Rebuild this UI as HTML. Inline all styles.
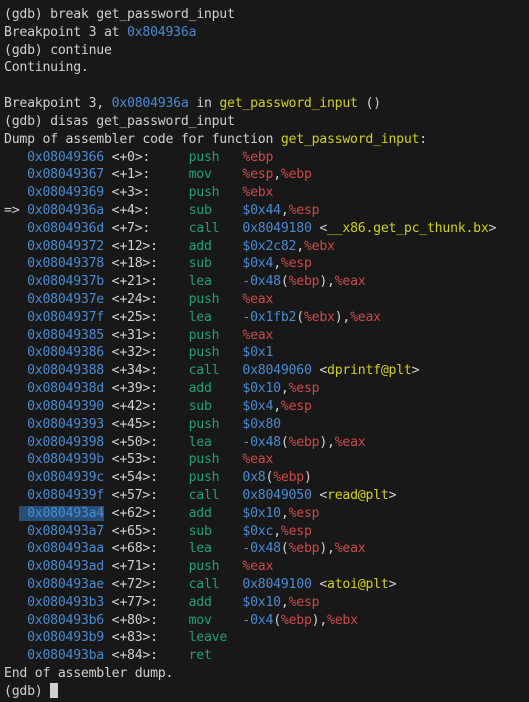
<!DOCTYPE html>
<html><head><meta charset="utf-8"><style>
html,body{margin:0;padding:0;background:#181818;width:529px;height:702px;overflow:hidden}
pre{margin:0;padding:6px 0 0 4px;font-family:"DejaVu Sans Mono","Liberation Mono",monospace;font-size:13.2px;letter-spacing:-0.25px;line-height:17.82px;color:#d0d0d0;white-space:pre}
.b{color:#4a8ad0}.g{color:#23a06f}.r{color:#c94a4a}.y{color:#cfcf1f}
.h{background:#264f78;box-shadow:-8px 0 0 #264f78}
.c{display:inline-block;width:8px;height:15px;background:#d0d0d0;vertical-align:-3px}
</style></head><body><pre>(gdb) break get_password_input
Breakpoint 3 at <span class="b">0x804936a</span>
(gdb) continue
Continuing.

Breakpoint 3, <span class="b">0x0804936a</span> in <span class="y">get_password_input</span> ()
(gdb) disas get_password_input
Dump of assembler code for function <span class="y">get_password_input</span>:
   <span class="b">0x08049366</span> &lt;+0&gt;:     <span class="g">push</span>   <span class="r">%ebp</span>
   <span class="b">0x08049367</span> &lt;+1&gt;:     <span class="g">mov</span>    <span class="r">%esp</span>,<span class="r">%ebp</span>
   <span class="b">0x08049369</span> &lt;+3&gt;:     <span class="g">push</span>   <span class="r">%ebx</span>
=&gt; <span class="b">0x0804936a</span> &lt;+4&gt;:     <span class="g">sub</span>    <span class="b">$0x44</span>,<span class="r">%esp</span>
   <span class="b">0x0804936d</span> &lt;+7&gt;:     <span class="g">call</span>   <span class="b">0x8049180</span> &lt;<span class="y">__x86.get_pc_thunk.bx</span>&gt;
   <span class="b">0x08049372</span> &lt;+12&gt;:    <span class="g">add</span>    <span class="b">$0x2c82</span>,<span class="r">%ebx</span>
   <span class="b">0x08049378</span> &lt;+18&gt;:    <span class="g">sub</span>    <span class="b">$0x4</span>,<span class="r">%esp</span>
   <span class="b">0x0804937b</span> &lt;+21&gt;:    <span class="g">lea</span>    <span class="b">-0x48</span>(<span class="r">%ebp</span>),<span class="r">%eax</span>
   <span class="b">0x0804937e</span> &lt;+24&gt;:    <span class="g">push</span>   <span class="r">%eax</span>
   <span class="b">0x0804937f</span> &lt;+25&gt;:    <span class="g">lea</span>    <span class="b">-0x1fb2</span>(<span class="r">%ebx</span>),<span class="r">%eax</span>
   <span class="b">0x08049385</span> &lt;+31&gt;:    <span class="g">push</span>   <span class="r">%eax</span>
   <span class="b">0x08049386</span> &lt;+32&gt;:    <span class="g">push</span>   <span class="b">$0x1</span>
   <span class="b">0x08049388</span> &lt;+34&gt;:    <span class="g">call</span>   <span class="b">0x8049060</span> &lt;<span class="y">dprintf@plt</span>&gt;
   <span class="b">0x0804938d</span> &lt;+39&gt;:    <span class="g">add</span>    <span class="b">$0x10</span>,<span class="r">%esp</span>
   <span class="b">0x08049390</span> &lt;+42&gt;:    <span class="g">sub</span>    <span class="b">$0x4</span>,<span class="r">%esp</span>
   <span class="b">0x08049393</span> &lt;+45&gt;:    <span class="g">push</span>   <span class="b">$0x80</span>
   <span class="b">0x08049398</span> &lt;+50&gt;:    <span class="g">lea</span>    <span class="b">-0x48</span>(<span class="r">%ebp</span>),<span class="r">%eax</span>
   <span class="b">0x0804939b</span> &lt;+53&gt;:    <span class="g">push</span>   <span class="r">%eax</span>
   <span class="b">0x0804939c</span> &lt;+54&gt;:    <span class="g">push</span>   <span class="b">0x8</span>(<span class="r">%ebp</span>)
   <span class="b">0x0804939f</span> &lt;+57&gt;:    <span class="g">call</span>   <span class="b">0x8049050</span> &lt;<span class="y">read@plt</span>&gt;
   <span class="b h">0x080493a4</span> &lt;+62&gt;:    <span class="g">add</span>    <span class="b">$0x10</span>,<span class="r">%esp</span>
   <span class="b">0x080493a7</span> &lt;+65&gt;:    <span class="g">sub</span>    <span class="b">$0xc</span>,<span class="r">%esp</span>
   <span class="b">0x080493aa</span> &lt;+68&gt;:    <span class="g">lea</span>    <span class="b">-0x48</span>(<span class="r">%ebp</span>),<span class="r">%eax</span>
   <span class="b">0x080493ad</span> &lt;+71&gt;:    <span class="g">push</span>   <span class="r">%eax</span>
   <span class="b">0x080493ae</span> &lt;+72&gt;:    <span class="g">call</span>   <span class="b">0x8049100</span> &lt;<span class="y">atoi@plt</span>&gt;
   <span class="b">0x080493b3</span> &lt;+77&gt;:    <span class="g">add</span>    <span class="b">$0x10</span>,<span class="r">%esp</span>
   <span class="b">0x080493b6</span> &lt;+80&gt;:    <span class="g">mov</span>    <span class="b">-0x4</span>(<span class="r">%ebp</span>),<span class="r">%ebx</span>
   <span class="b">0x080493b9</span> &lt;+83&gt;:    <span class="g">leave</span>
   <span class="b">0x080493ba</span> &lt;+84&gt;:    <span class="g">ret</span>
End of assembler dump.
(gdb) <span class="c"></span></pre></body></html>
